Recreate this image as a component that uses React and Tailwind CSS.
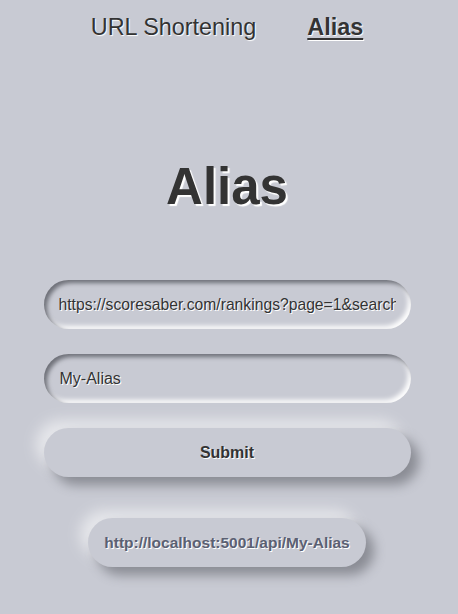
export default function App() {
  return (
    <div className="min-h-[614px] w-full bg-[#c8cad3] font-['Liberation_Sans',Arial,sans-serif] text-[#333333]">
      <div className="w-[454px] flex flex-col items-center">
        <nav className="flex items-center gap-[51px] pt-[13px] text-[23.4px] leading-[28px] [text-shadow:1px_1px_1px_#ffffff]">
          <span>URL Shortening</span>
          <span className="font-bold underline underline-offset-[3px] decoration-[2px]">Alias</span>
        </nav>
        <h1 className="mt-[116px] text-[51px] leading-[60px] font-bold [text-shadow:2px_2px_1px_#ffffff]">Alias</h1>
        <div className="mt-[63px] flex flex-col gap-[25px] w-[367px]">
          <div className="h-[49px] rounded-full bg-[#c8cad3] shadow-[inset_3px_3px_4px_#6e7078,inset_-3px_-3px_5px_#ffffff] flex items-center px-[15px]">
            <div className="flex-1 overflow-hidden">
              <span className="block whitespace-nowrap text-[15.7px] [text-shadow:1px_1px_0_#ffffff]">https://scoresaber.com/rankings?page=1&amp;search</span>
            </div>
          </div>
          <div className="h-[49px] rounded-full bg-[#c8cad3] shadow-[inset_3px_3px_4px_#6e7078,inset_-3px_-3px_5px_#ffffff] flex items-center px-[16px]">
            <span className="whitespace-nowrap text-[16px] [text-shadow:1px_1px_0_#ffffff]">My-Alias</span>
          </div>
          <button className="h-[49px] rounded-full bg-[#c8cad3] shadow-[8px_8px_12px_#8a8c94,-8px_-8px_14px_#e6e7eb] flex items-center justify-center text-[16px] font-bold text-[#333333] [text-shadow:1px_1px_0_#ffffff]">
            Submit
          </button>
        </div>
        <div className="mt-[41px] h-[49px] px-[16px] rounded-full bg-[#c8cad3] shadow-[8px_8px_12px_#8a8c94,-8px_-8px_14px_#e6e7eb] flex items-center justify-center text-[15.5px] font-bold text-[#5b6072] [text-shadow:1px_1px_0_#ffffff]">
          http://localhost:5001/api/My-Alias
        </div>
      </div>
    </div>
  );
}
